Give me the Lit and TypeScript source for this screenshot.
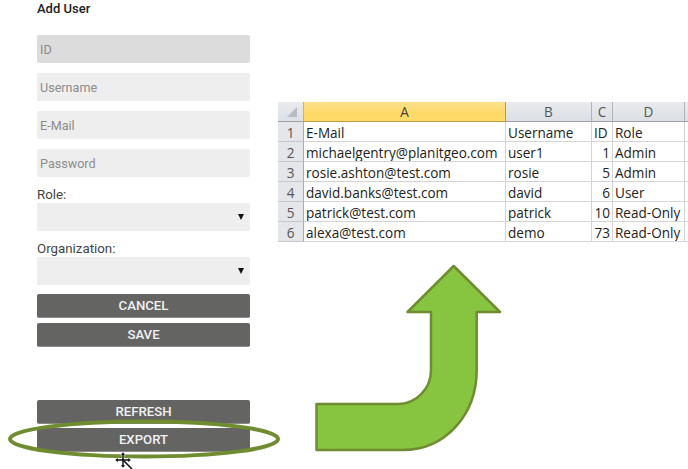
import { LitElement, html, css, svg } from "lit";
import { customElement } from "lit/decorators.js";

const rows = [
  ["E-Mail", "Username", "ID", "Role"],
  ["michaelgentry@planitgeo.com", "user1", "1", "Admin"],
  ["rosie.ashton@test.com", "rosie", "5", "Admin"],
  ["david.banks@test.com", "david", "6", "User"],
  ["patrick@test.com", "patrick", "10", "Read-Only"],
  ["alexa@test.com", "demo", "73", "Read-Only"],
];

@customElement("app-root")
export class AppRoot extends LitElement {
  static styles = css`
    :host { display: block; position: relative; width: 688px; height: 469px; overflow: hidden; background: #fff; font-family: Roboto, "Liberation Sans", sans-serif; }
    .page { display: flex; align-items: flex-start; height: 469px; }
    .form { width: 213px; margin-left: 37px; display: flex; flex-direction: column; flex: none; }
    h1 { margin: 0; height: 35px; font-size: 13px; line-height: 18px; font-weight: 500; color: #222; }
    .field { height: 28px; border-radius: 2px; background: #eee; margin-bottom: 10px; padding-left: 3px; box-sizing: border-box; font-size: 12.6px; line-height: 29px; color: #8c8c8c; }
    .field.off { background: #dcdcdc; }
    label { font-size: 13.3px; line-height: 16px; color: #444; display: block; }
    .select { height: 28px; border-radius: 2px; background: #eee; display: flex; align-items: center; justify-content: flex-end; padding-right: 6px; box-sizing: border-box; }
    .tri { width: 0; height: 0; border-left: 3px solid transparent; border-right: 3px solid transparent; border-top: 6px solid #111; }
    .org { margin-top: 10px; }
    .btn { height: 24px; border-radius: 2px; background: #646462; border-bottom: 1px solid #8a8a88; box-sizing: border-box; color: #f2f2f2; font-size: 13.2px; font-weight: 500; line-height: 24px; text-align: center; }
    .gap9 { margin-top: 9px; }
    .gap4 { margin-top: 4.5px; }
    .gap53 { margin-top: 53px; }
    .sheet { margin: 102px 0 0 28px; display: grid; grid-template-columns: 26px 202px 86px 21px 72px 6px; grid-auto-rows: 20px; font-family: "Open Sans", "Liberation Sans", sans-serif; font-size: 13.55px; color: #222; flex: none; }
    .cell { border-right: 1px solid #d4d4d4; border-bottom: 1px solid #d4d4d4; box-sizing: border-box; padding: 2px 2px 0 2px; line-height: 18px; white-space: nowrap; overflow: hidden; }
    .num { text-align: right; }
    .hd { background: linear-gradient(#e9ebee, #dcdfe4); border-right: 1px solid #b0b4ba; border-bottom: 1px solid #9ea2a8; color: #555; text-align: center; padding: 1px 0 0; }
    .hd.on { background: linear-gradient(#fce28e, #ffd966 60%, #ffdc6c); border-right-color: #c29a3e; border-bottom-color: #c29a3e; color: #444; }
    .hd svg { display: block; margin-top: -1px; }
    .rowh { background: #e4e6ea; border-right: 1px solid #a8acb2; border-bottom: 1px solid #c4c7cc; color: #555; text-align: center; padding: 2px 0 0; }
    .overlay { position: absolute; left: 0; top: 0; pointer-events: none; }
  `;

  render() {
    return html`
      <div class="page">
        <div class="form">
          <h1>Add User</h1>
          <div class="field off">ID</div>
          <div class="field">Username</div>
          <div class="field">E-Mail</div>
          <div class="field">Password</div>
          <label>Role:</label>
          <div class="select"><span class="tri"></span></div>
          <label class="org">Organization:</label>
          <div class="select"><span class="tri"></span></div>
          <div class="btn gap9">CANCEL</div>
          <div class="btn gap4">SAVE</div>
          <div class="btn gap53">REFRESH</div>
          <div class="btn gap4">EXPORT</div>
        </div>
        <div class="sheet">
          <div class="cell hd">
            <svg width="25" height="19" viewBox="0 0 25 19"><path d="M19 5v10H9z" fill="#b9bdc3"/></svg>
          </div>
          <div class="cell hd on">A</div>
          <div class="cell hd">B</div>
          <div class="cell hd">C</div>
          <div class="cell hd">D</div>
          <div class="cell hd"></div>
          ${rows.map((r, i) => html`
            <div class="cell rowh">${i + 1}</div>
            <div class="cell">${r[0]}</div>
            <div class="cell">${r[1]}</div>
            <div class="cell ${i ? "num" : ""}">${r[2]}</div>
            <div class="cell">${r[3]}</div>
            <div class="cell"></div>
          `)}
        </div>
      </div>
      <svg class="overlay" width="688" height="469" viewBox="0 0 688 469">
        <ellipse cx="144" cy="439" rx="134" ry="17.5" fill="none" stroke="#6f8c30" stroke-width="4"/>
        <path d="M453.7 266 L500 312 H476.7 V370 C476.7 415 445 450 403 450 H316.5 V404 H398 C416 404 431 389 431 370 V312 H407.5 Z" fill="#87c540" stroke="#6f8c30" stroke-width="2.5" stroke-linejoin="round"/>
        ${svg`<g transform="translate(123 460)">
          <path d="M0 -8 L2.5 -5 H1 V-1 H5 V-2.5 L8 0 L5 2.5 V1 H1 V5 H2.5 L0 8 L-2.5 5 H-1 V1 H-5 V2.5 L-8 0 L-5 -2.5 V-1 H-1 V-5 H-2.5 Z" fill="#111" stroke="#fff" stroke-width="0.5"/>
          <path d="M1 1 L9 9" stroke="#111" stroke-width="1.6"/>
        </g>`}
      </svg>
    `;
  }
}
